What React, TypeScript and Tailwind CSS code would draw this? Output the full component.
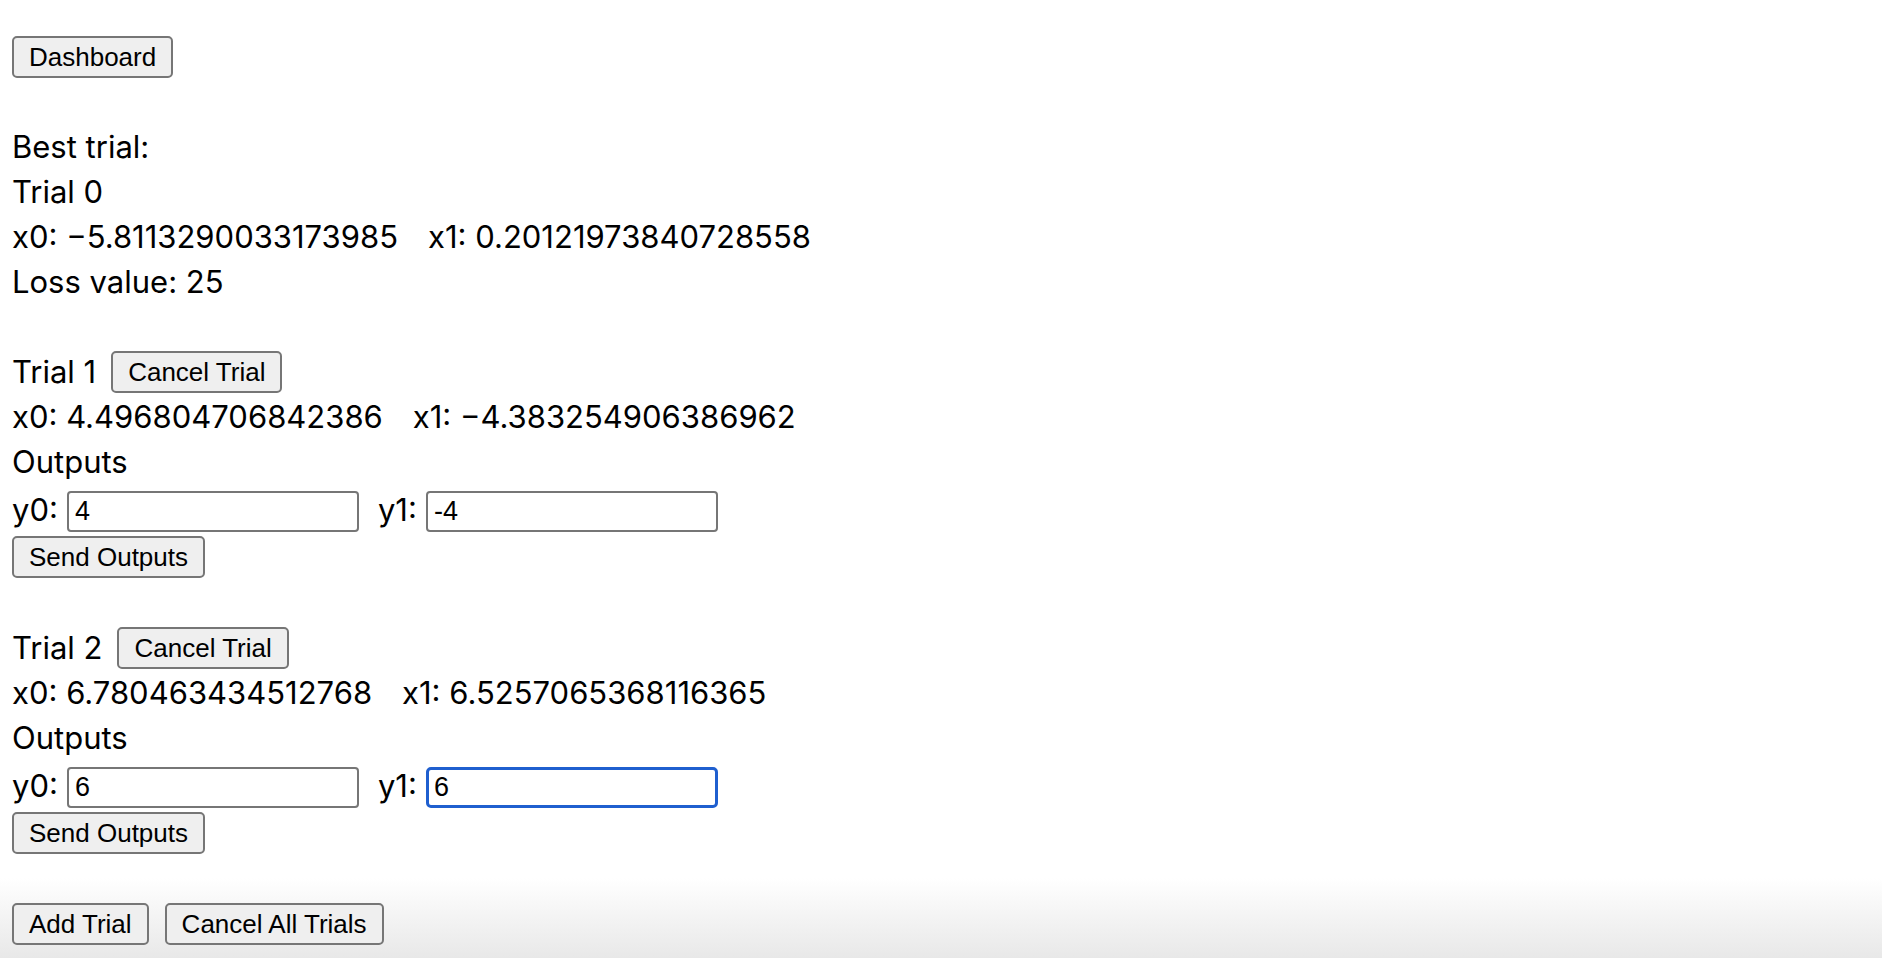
import { useEffect, useRef } from "react";
import type { ReactNode } from "react";

type Trial = {
  id: number;
  x0: string;
  x1: string;
  y0: string;
  y1: string;
  focused?: boolean;
};

const trials: Trial[] = [
  { id: 1, x0: "4.496804706842386", x1: "\u22124.383254906386962", y0: "4", y1: "-4" },
  { id: 2, x0: "6.780463434512768", x1: "6.5257065368116365", y0: "6", y1: "6", focused: true },
];

function Btn({ children }: { children: ReactNode }) {
  return (
    <button className="h-[42px] shrink-0 rounded-[5px] border-2 border-[#767676] bg-[#efefef] px-[15px] font-['Liberation_Sans',Arial,sans-serif] text-[26px] leading-none text-black">
      {children}
    </button>
  );
}

function OutputInput({ value, focused }: { value: string; focused?: boolean }) {
  const ref = useRef<HTMLInputElement>(null);

  useEffect(() => {
    if (focused && ref.current) {
      ref.current.focus();
      ref.current.setSelectionRange(value.length, value.length);
    }
  }, [focused, value]);

  return (
    <input
      ref={ref}
      readOnly
      value={value}
      className={
        focused
          ? "h-[41px] w-[292px] rounded-[5px] border-[3px] border-[#1f5fcf] px-[5px] font-['Liberation_Sans',Arial,sans-serif] text-[27px] text-black caret-black outline-none"
          : "h-[41px] w-[292px] rounded-[4px] border-2 border-[#767676] px-[6px] font-['Liberation_Sans',Arial,sans-serif] text-[27px] text-black outline-none"
      }
    />
  );
}

function Params({ x0, x1 }: { x0: string; x1: string }) {
  return (
    <div className="flex h-[45px] items-center">
      <span>x0: {x0}</span>
      <span className="ml-[30px]">x1: {x1}</span>
    </div>
  );
}

export default function App() {
  return (
    <div className="min-h-screen bg-[linear-gradient(to_bottom,#ffffff_calc(100%_-_80px),#e8e8e8)] pl-[12px] pt-[34px] font-['Inter','Liberation_Sans',sans-serif] text-[31px] leading-[45px] text-black">
      <div className="flex h-[45px] items-center">
        <Btn>Dashboard</Btn>
      </div>
      <div className="h-[45px]" />

      {/* best trial */}
      <div className="h-[45px]">Best trial:</div>
      <div className="h-[45px]">Trial 0</div>
      <Params x0={"\u22125.8113290033173985"} x1="0.20121973840728558" />
      <div className="h-[45px]">Loss value: 25</div>
      <div className="h-[45px]" />

      {trials.map((t) => (
        <div key={t.id}>
          <div className="flex h-[45px] items-center gap-[15px]">
            <span>Trial {t.id}</span>
            <Btn>Cancel Trial</Btn>
          </div>
          <Params x0={t.x0} x1={t.x1} />
          <div className="h-[45px]">Outputs</div>
          <div className="flex h-[50px] items-center">
            <span>y0:</span>
            <span className="ml-[9px]">
              <OutputInput value={t.y0} />
            </span>
            <span className="ml-[19px]">y1:</span>
            <span className="ml-[9px]">
              <OutputInput value={t.y1} focused={t.focused} />
            </span>
          </div>
          <div className="flex h-[46px] items-center">
            <Btn>Send Outputs</Btn>
          </div>
          <div className="h-[45px]" />
        </div>
      ))}

      <div className="flex h-[46px] items-center gap-[16px]">
        <Btn>Add Trial</Btn>
        <Btn>Cancel All Trials</Btn>
      </div>
    </div>
  );
}
